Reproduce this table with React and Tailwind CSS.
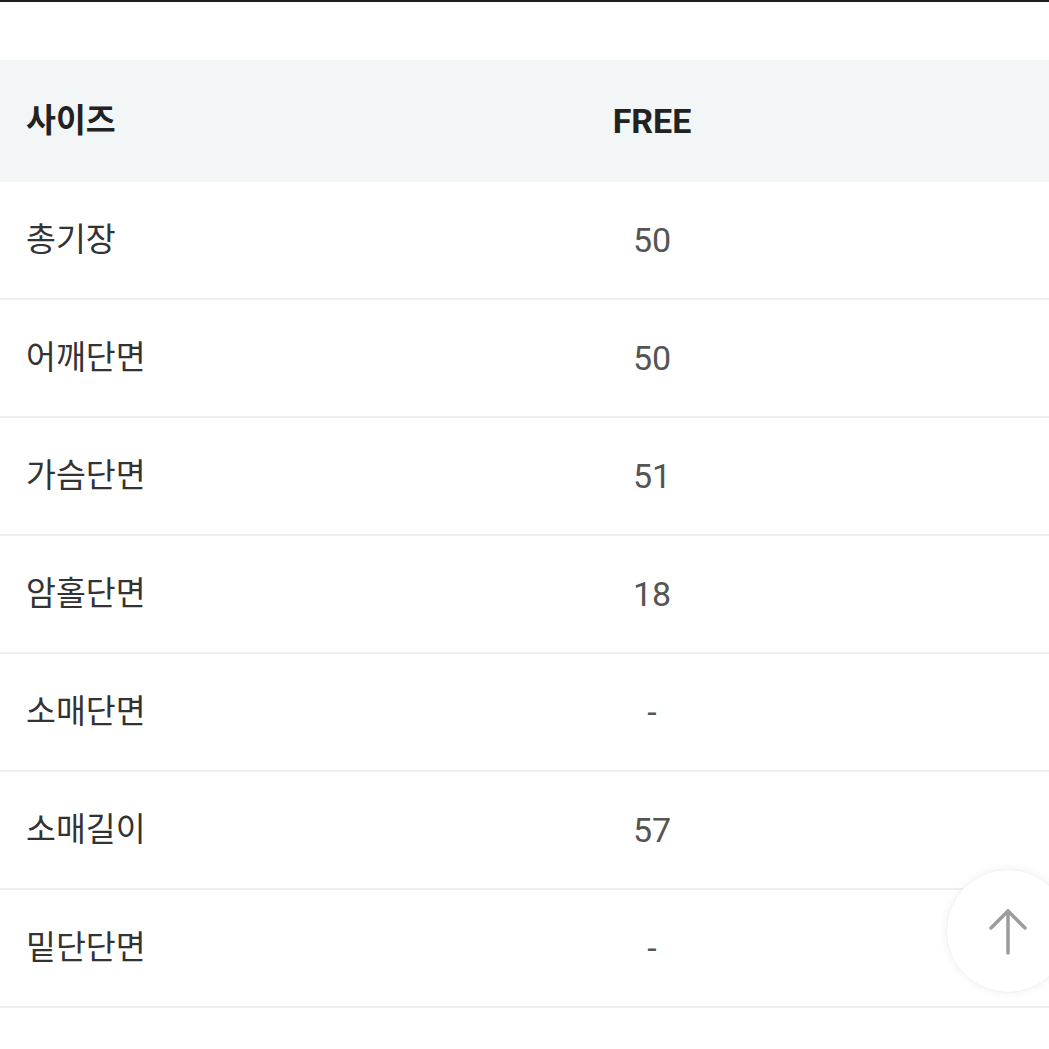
import React from "react";

const rows = [
  ["총기장", "50"],
  ["어깨단면", "50"],
  ["가슴단면", "51"],
  ["암홀단면", "18"],
  ["소매단면", "-"],
  ["소매길이", "57"],
  ["밑단단면", "-"],
];

export default function App() {
  return (
    <div
      className="relative w-[1049px] h-[1049px] overflow-hidden bg-white"
      style={{ fontFamily: 'Roboto, "Noto Sans CJK KR", "Noto Sans", sans-serif' }}
    >
      <div className="h-[2px] bg-[#1f1f1f]" />
      <div className="h-[58px]" />
      <div className="grid grid-cols-[255px_1fr] h-[122px] items-center bg-[#f2f6f7]">
        <div className="pl-[26px] text-[32.5px] leading-none font-bold text-[#222]">사이즈</div>
        <div className="text-center text-[34px] leading-none font-bold text-[#222]">FREE</div>
      </div>
      {rows.map(([label, value]) => (
        <div
          key={label}
          className="grid grid-cols-[255px_1fr] h-[118px] items-center border-b-2 border-[#efefef]"
        >
          <div className="pl-[26px] text-[32.5px] leading-none text-[#333]">{label}</div>
          <div className="text-center text-[34px] leading-none text-[#555]">{value}</div>
        </div>
      ))}
      <div className="absolute left-[946px] top-[869px] w-[124px] h-[124px] rounded-full bg-white shadow-[0_0_10px_rgba(0,0,0,0.06)] border border-[#f2f2f2] flex items-center justify-center">
        <svg
          width="40"
          height="48"
          viewBox="0 0 40 48"
          fill="none"
          stroke="#9c9c9c"
          strokeWidth="3.5"
          strokeLinecap="round"
          strokeLinejoin="round"
        >
          <path d="M20 4 V46" />
          <path d="M3 21 L20 4 L37 21" />
        </svg>
      </div>
    </div>
  );
}
